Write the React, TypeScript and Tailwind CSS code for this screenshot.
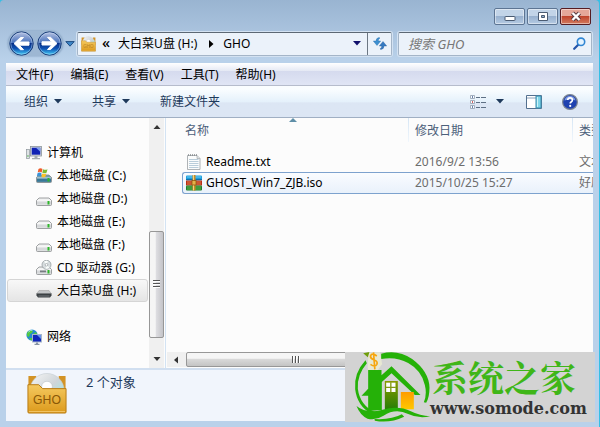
import type { ReactNode } from 'react'

type DriveKind = 'system' | 'disk' | 'cd' | 'usb'

const menus = ['文件(F)', '编辑(E)', '查看(V)', '工具(T)', '帮助(H)']

const drives: { name: string; kind: DriveKind; selected?: boolean }[] = [
  { name: '本地磁盘 (C:)', kind: 'system' },
  { name: '本地磁盘 (D:)', kind: 'disk' },
  { name: '本地磁盘 (E:)', kind: 'disk' },
  { name: '本地磁盘 (F:)', kind: 'disk' },
  { name: 'CD 驱动器 (G:)', kind: 'cd' },
  { name: '大白菜U盘 (H:)', kind: 'usb', selected: true },
]

const files = [
  { name: 'Readme.txt', date: '2016/9/2 13:56', type: '文本文档', archive: false },
  { name: 'GHOST_Win7_ZJB.iso', date: '2015/10/25 15:27', type: '好压 ISO', archive: true },
]

const Triangle = ({ className = 'text-[#1e395b]' }: { className?: string }) => (
  <svg viewBox="0 0 8 5" className={`h-[5px] w-2 shrink-0 ${className}`}>
    <path d="M0 0h8L4 4.5z" fill="currentColor" />
  </svg>
)

const NavButtons = () => (
  <div className="relative flex shrink-0 items-center gap-[3px] rounded-full bg-[#9db7d3] px-px shadow-[0_0_2px_#6f8cae]">
    {[false, true].map((forward) => (
      <button key={String(forward)} aria-label={forward ? '前进' : '后退'}>
        <svg viewBox="0 0 25 25" className="size-[25px]">
          <defs>
            <linearGradient id="navBall" x1="0" y1="0" x2="0" y2="1">
              <stop offset="0" stopColor="#b9c3e2" />
              <stop offset=".46" stopColor="#4a74bd" />
              <stop offset=".5" stopColor="#083088" />
              <stop offset=".72" stopColor="#1054b4" />
              <stop offset="1" stopColor="#46d4fb" />
            </linearGradient>
          </defs>
          <circle cx="12.500" cy="12.500" r="11.700" fill="url(#navBall)" stroke="#183c78" />
          <circle cx="12.500" cy="12.500" r="10.700" fill="none" stroke="#cfe4fa" strokeOpacity=".55" strokeWidth=".8" />
          <path
            d="M5 12.500 11.500 6.500h3l-4.200 4.500H20v3.200h-9.700l4.200 4.500h-3z"
            fill="#fff"
            stroke="#fff"
            strokeLinejoin="round"
            transform={forward ? 'rotate(180 12.500 12.500)' : undefined}
          />
        </svg>
      </button>
    ))}
  </div>
)

const FolderIcon = ({ className, label }: { className: string; label?: boolean }) => (
  <svg viewBox="0 0 40 44" className={className}>
    <defs>
      <linearGradient id="folder" x1="0" y1="0" x2="0" y2="1">
        <stop offset="0" stopColor="#f5c95f" />
        <stop offset="1" stopColor="#dc9a1c" />
      </linearGradient>
      <linearGradient id="disc" x1="0" y1="0" x2="1" y2="1">
        <stop offset="0" stopColor="#f7f7f7" />
        <stop offset=".5" stopColor="#cfd5d9" />
        <stop offset=".75" stopColor="#aee4e0" />
        <stop offset="1" stopColor="#ededf5" />
      </linearGradient>
    </defs>
    <path d="M1 4h8v20H1zM32 4h7v20h-7z" fill="#d39325" />
    <circle cx="20" cy="19" r="17.500" fill="url(#disc)" stroke="#c3cbd0" strokeWidth=".6" />
    <circle cx="20" cy="15" r="5.500" fill="#fff" stroke="#b8bfc4" strokeWidth=".6" />
    <path d="M.500 13h11l4 4h24v24q0 1-1 1h-37q-1 0-1-1z" fill="url(#folder)" stroke="#b87b12" />
    <path d="M1.500 40.500h37" stroke="#f8d27e" strokeWidth=".8" />
    <text
      x="20"
      y="33"
      textAnchor="middle"
      fontSize="12.500"
      fill={label ? '#8a5806' : '#b98022'}
      className="font-['Liberation_Sans',sans-serif]"
    >
      GHO
    </text>
  </svg>
)

const ComputerIcon = () => (
  <svg viewBox="0 0 16 16" className="size-4 shrink-0">
    <rect x=".5" y="4.500" width="3" height="9" fill="#dfe3e6" stroke="#8c949b" strokeWidth=".7" />
    <path d="M1.200 11h1.500" stroke="#3daa35" />
    <rect x="4.500" y="1.500" width="11" height="9.500" fill="#d9dde0" stroke="#8c949b" strokeWidth=".8" />
    <path d="M5.700 2.700h8.600v7H5.700z" fill="#1022b4" />
    <path d="M10 2.700h4.300v4z" fill="#7fa1ee" />
    <path d="M8.500 11h3v2h2.500v1.300H6V13h2.500z" fill="#a5acb1" />
  </svg>
)

const NetworkIcon = () => (
  <svg viewBox="0 0 16 16" className="size-4 shrink-0">
    <circle cx="6" cy="6" r="5.600" fill="#258ad4" />
    <path d="M2 2.500 5 1l2 1-1 2-2 1-1 3-2-1q-.6-3 1-4.500M7 5l3-2 1 2-2 3-2-.500zM3 9l3 0 0 2.500q-2 0-3-2.500" fill="#52c943" />
    <path d="M2.500 3q2-2.500 4-2" stroke="#c5eefa" fill="none" />
    <rect x="6.500" y="5.500" width="9" height="7.500" fill="#1128ba" stroke="#a7b6c8" />
    <path d="M11 6h4v4z" fill="#6694ee" />
    <path d="M10 13.500h2v1.200h1.500V16h-5v-1.300H10z" fill="#8694a4" />
  </svg>
)

const DriveIcon = ({ kind }: { kind: DriveKind }) => (
  <svg viewBox="0 0 16 16" className="size-4 shrink-0">
    {kind === 'usb' ? (
      <>
        <path d="M3 7.500h10l2.500 3.500h-15z" fill="#c3c5c7" stroke="#999" strokeWidth=".5" />
        <path d="M.500 10.500h15v2l-1.500 2H2l-1.500-2z" fill="#3c4144" />
        <path d="M2.500 13h11" stroke="#73797c" />
      </>
    ) : (
      <>
        <path
          d="M3 7h10l2.500 2.500v4q0 1-1 1h-13q-1 0-1-1v-4z"
          fill={kind === 'system' ? '#719eb0' : '#f1f2f2'}
          stroke="#85898c"
          strokeWidth=".8"
        />
        <path d="M1 10h14v3.700H1z" fill={kind === 'system' ? '#397897' : '#d6d8da'} />
        <path d="M1 10h14" stroke="#fff" strokeWidth=".7" />
        <rect x="11.500" y="10" width="2" height="3.500" fill="#2eb82a" />
      </>
    )}
    {kind === 'system' && (
      <>
        <path d="M2.500 1q2-1.500 4 0L5.700 4.500q-2-1.300-4 0z" fill="#ef5a28" />
        <path d="M7.200 1.200q2 1.300 4.300 0l-1 3.500q-2 1.300-4.200 0z" fill="#7cba32" />
        <path d="M1.500 5.200q2-1.200 4 0L4.800 8.500q-2-1.300-4 0z" fill="#3993d8" />
        <path d="M6.200 5.500q2 1.200 4.200 0l-1 3.300q-2 1.200-4 0z" fill="#fbc22c" />
      </>
    )}
    {kind === 'cd' && (
      <>
        <circle cx="10.500" cy="4.800" r="4.500" fill="#d7dddf" stroke="#8b9397" strokeWidth=".7" />
        <path d="M10.500 4.800 8 1.500q2-1.200 4-.5zM10.500 4.800l3 3q-2 1.500-4 .800z" fill="#f9fdfb" />
        <circle cx="10.500" cy="4.800" r="1.300" fill="#fff" stroke="#8b9397" strokeWidth=".6" />
        <path d="M4 10.500h6v1.800H4z" fill="#777d81" />
      </>
    )}
  </svg>
)

const TextFileIcon = () => (
  <svg viewBox="0 0 16 16" className="size-4">
    <path d="M1.500 1.500h9.500l3 3v11H1.500z" fill="#fbfcfc" stroke="#9ba0a3" strokeWidth=".8" />
    <path d="M2.500 0v2M4.500 0v2M6.500 0v2M8.500 0v2M10.500 0v2" stroke="#7d8285" strokeWidth=".7" />
    <path d="M3 5.500h9.500M3 7.500h9.500M3 9.500h9.500M3 11.500h9.500M3 13.500h9.500" stroke="#a9c0d1" strokeWidth=".8" />
    <path d="M11 1.500v3h3" fill="#dde1e3" stroke="#9ba0a3" strokeWidth=".6" />
  </svg>
)

const ArchiveIcon = () => (
  <svg viewBox="0 0 16 16" className="size-4">
    <rect y=".5" width="16" height="5" rx="1" fill="#1c9edc" />
    <path d="M1 2h14" stroke="#70d0f5" />
    <path d="M0 4.500h16" stroke="#1370a8" />
    <rect y="5.500" width="16" height="5" fill="#b82d16" />
    <path d="M1 7h14M1 9h14" stroke="#f1a467" strokeWidth=".7" />
    <rect y="10.500" width="16" height="5" rx="1" fill="#1d7e2d" />
    <path d="M1 12h14M1 14h14" stroke="#7cc654" strokeWidth=".8" />
    <path d="M6.500 0h3v15.500h-3z" fill="#c98a22" />
    <path d="M7.500 0v15.500" stroke="#f4d283" />
    <rect x="6" y="5.500" width="4" height="4.500" fill="#e5b149" stroke="#85510b" strokeWidth=".7" />
  </svg>
)

const WindowButton = ({ label, close, children }: { label: string; close?: boolean; children: ReactNode }) => (
  <button
    aria-label={label}
    className={`flex h-[17px] w-[31px] items-center justify-center rounded-[2px] border shadow-[inset_0_0_0_1px_rgba(255,255,255,0.45)] ${
      close
        ? 'border-[#561c22] bg-linear-to-b from-[#e5a799] from-45% via-[#c0442c] via-50% to-[#d27b60]'
        : 'border-[#5d7593] bg-linear-to-b from-[#c2d4e8] from-45% via-[#98b1cf] via-50% to-[#b5cbe3]'
    }`}
  >
    <svg viewBox="0 0 12 11" className="h-[11px] w-3">
      {children}
    </svg>
  </button>
)

const TitleBar = () => (
  <div className="flex justify-end gap-[2px] pt-2 pr-[2px]">
    <WindowButton label="最小化">
      <rect x="1" y="5.500" width="10" height="4" rx=".5" fill="#fff" stroke="#4a5b72" />
    </WindowButton>
    <WindowButton label="最大化">
      <path d="M1.500 1.500h9v8h-9z" fill="#fff" stroke="#4a5b72" />
      <path d="M4.500 4.500h3v2h-3z" fill="#91adcc" stroke="#4a5b72" />
    </WindowButton>
    <WindowButton label="关闭" close>
      <path d="m2.500 2 7 7m0-7-7 7" stroke="#54393f" strokeWidth="4.200" />
      <path d="m2.500 2 7 7m0-7-7 7" stroke="#fff" strokeWidth="2.400" />
    </WindowButton>
  </div>
)

const AddressRow = () => (
  <div className="flex items-center pr-px pb-[7px] pt-[6px]">
    <div className="flex flex-none items-center gap-[2px] pl-[2px]">
      <NavButtons />
      <button aria-label="最近的页面">
        <svg viewBox="0 0 10 6" className="h-[6px] w-[10px]">
          <path d="M.800.600h8.400L5 5.200z" fill="#3d87c8" stroke="#17447b" strokeWidth=".9" />
        </svg>
      </button>
    </div>
    <div className="ml-[2px] flex h-6 min-w-0 flex-1 rounded-[2px] border border-[#a4b5c8] border-t-[#5c6874] bg-[#ebf2fa] shadow-[0_0_0_1px_#d3e2f2]">
      <FolderIcon className="ml-[3px] h-4 w-[15px] self-center" />
      <span className="ml-[6px] text-[15px] leading-[18px] font-medium">«</span>
      <span className="ml-[8px] leading-[22px] whitespace-nowrap">大白菜U盘 (H:)</span>
      <svg viewBox="0 0 5 8" className="ml-[12px] h-2 w-[5px] self-center">
        <path d="M0 0v8l4.500-4z" />
      </svg>
      <span className="ml-[9px] leading-[22px]">GHO</span>
      <button aria-label="以前的位置" className="mr-[6px] ml-auto">
        <Triangle className="text-[#10106c]" />
      </button>
      <button aria-label="刷新" className="flex w-6 items-center justify-center border-l border-[#6c7783]">
        <svg viewBox="0 0 14 13" className="h-[13px] w-[14px]">
          <path d="M6 .500Q3 1 3 4H.300L4 8.500 7.700 4H5.200q0-2 1.800-3z" fill="#3c8fd0" stroke="#2a6fae" strokeWidth=".4" />
          <path d="M8 12.500q3-.500 3-3.500h2.700L10 4.500 6.300 9h2.500q0 2-1.800 3z" fill="#3579c0" stroke="#2a5f9e" strokeWidth=".4" />
        </svg>
      </button>
    </div>
    <div className="ml-[6px] flex h-6 w-[194px] items-center rounded-[2px] border border-[#a4b5c8] border-t-[#5c6874] bg-[#ebf2fa] pr-[5px] pl-[9px] shadow-[0_0_0_1px_#d3e2f2]">
      <input
        aria-label="搜索 GHO"
        placeholder="搜索 GHO"
        className="min-w-0 flex-1 text-[13px] italic outline-none placeholder:text-[#777]"
      />
      <svg viewBox="0 0 13 13" className="size-[13px]" fill="none">
        <path d="m1.200 11.800 4-4" stroke="#2454a8" strokeWidth="2.200" strokeLinecap="round" />
        <circle cx="8" cy="4.800" r="3.700" fill="#e4f3ff" stroke="#3186d3" strokeWidth="1.600" />
      </svg>
    </div>
  </div>
)

const MenuBar = () => (
  <div className="flex h-[23px] gap-[17px] border-b border-[#b6bccc] bg-[linear-gradient(#fff,#e6eaf5_34%,#d5daee_36%,#e0e5f5)] pl-[10px] leading-[23px]">
    {menus.map((menu) => (
      <button key={menu} className="whitespace-nowrap">
        {menu}
      </button>
    ))}
  </div>
)

const Toolbar = () => (
  <div className="flex h-8 items-center border-b border-[#a0afc3] bg-linear-to-b from-[#fafdff] from-10% via-[#e5f1fb] via-50% to-[#dce6f4] to-55% pr-[15px] pl-[18px] text-[#1e395b]">
    <button className="mr-[30px] flex items-center gap-[6px]">
      组织
      <Triangle />
    </button>
    <button className="mr-[30px] flex items-center gap-[6px]">
      共享
      <Triangle />
    </button>
    <button>新建文件夹</button>
    <button aria-label="更改您的视图" className="mr-[22px] ml-auto flex items-center gap-[10px]">
      <svg viewBox="0 0 16 14" className="h-[14px] w-4" fill="none">
        <path d="M.500.500h4v3h-4zM.500 5.500h4v3h-4zM.500 10.500h4v3h-4z" fill="#fff" stroke="#8f9dad" strokeWidth=".8" />
        <path d="M2 2h1M2 12h1" stroke="#355a94" strokeWidth="1.500" />
        <path d="M2 7h1" stroke="#c22f2f" strokeWidth="1.500" />
        <path d="M6 2.500h4m1 0h5M6 7.500h4m1 0h5M6 12.500h4m1 0h5" stroke="#5e7085" />
      </svg>
      <Triangle />
    </button>
    <button aria-label="显示预览窗格" className="mr-5">
      <svg viewBox="0 0 16 14" className="h-[14px] w-4">
        <path d="M.500.500h15v13H.500z" fill="#fff" stroke="#53708f" />
        <path d="M1 3h9" stroke="#8aa0b8" />
        <path d="M10 1h5v12h-5z" fill="#7fd5e8" stroke="#3b8aac" />
        <path d="M11.500 2v10" stroke="#caf3f8" />
      </svg>
    </button>
    <button aria-label="获取帮助">
      <svg viewBox="0 0 16 16" className="size-4">
        <circle cx="8" cy="8" r="7.400" fill="#1f42b0" stroke="#7e8792" strokeWidth="1.200" />
        <path d="M2.500 6.500a5.600 5.600 0 0 1 11 0q-5-2-11 0" fill="#7f9be2" />
        <path d="M5.700 6q.2-2.200 2.400-2.200T10.400 6q0 1.100-1.300 2-.9.600-.9 1.600" fill="none" stroke="#fff" strokeWidth="1.700" />
        <circle cx="8.200" cy="11.900" r="1.100" fill="#fff" />
      </svg>
    </button>
  </div>
)

const Sidebar = () => (
  <div className="flex w-40 shrink-0 border-r border-[#d3e3f3]">
    <nav className="min-w-0 flex-1 px-px pt-[23px] leading-[21px]">
      <a href="#computer" className="flex h-[23px] items-center gap-[5px] pl-[19px]">
        <ComputerIcon />
        计算机
      </a>
      {drives.map((drive) => (
        <a
          key={drive.name}
          href="#drive"
          className={`flex h-[23px] items-center gap-[5px] rounded-[3px] border pl-[28px] whitespace-nowrap ${
            drive.selected
              ? 'border-[#d5d5d5] bg-linear-to-b from-[#f8f8f8] to-[#e5e5e5]'
              : 'border-transparent'
          }`}
        >
          <DriveIcon kind={drive.kind} />
          {drive.name}
        </a>
      ))}
      <a href="#network" className="mt-[23px] flex h-[23px] items-center gap-[5px] pl-[19px]">
        <NetworkIcon />
        网络
      </a>
    </nav>
    <div className="mr-px flex w-[15px] flex-col items-center bg-[#f0f0f0]">
      <svg viewBox="0 0 8 4" className="mt-[7px] h-1 w-2">
        <path d="M4 0l3.500 4h-7z" fill="#333" />
      </svg>
      <div className="flex-[103]" />
      <div className="flex w-full flex-[106] items-center justify-center rounded-[2px] border border-[#979797] bg-linear-to-r from-[#f5f5f5] from-40% via-[#dcdce0] via-50% to-[#c4c4c8]">
        <svg viewBox="0 0 7 9" className="h-[9px] w-[7px]">
          <path d="M0 .500h7M0 3.500h7M0 6.500h7" stroke="#555" />
          <path d="M0 1.500h7M0 4.500h7M0 7.500h7" stroke="#fff" />
        </svg>
      </div>
      <div className="flex-[19]" />
      <svg viewBox="0 0 8 4" className="mb-[7px] h-1 w-2">
        <path d="M.500 0h7L4 4z" fill="#333" />
      </svg>
    </div>
  </div>
)

const FileList = () => (
  <div className="flex min-w-0 flex-1 flex-col overflow-hidden pl-px">
    <svg viewBox="0 0 8 4" className="ml-[122px] h-1 w-2">
      <path d="M4 0l4 4H0z" fill="#5f8fa8" />
    </svg>
    <table className="-mt-1 ml-[15px] w-[calc(100%-15px)] table-fixed border-separate border-spacing-0 text-left">
      <colgroup>
        <col className="w-[226px]" />
        <col className="w-[164px]" />
        <col />
      </colgroup>
      <thead>
        <tr className="text-[#4c607a]">
          <th className="h-[33px] pb-[7px] pl-[3px] font-normal">名称</th>
          <th className="bg-linear-to-b from-[#d6e6f5] to-[#f0f6fc] bg-[length:1px_24px] bg-no-repeat pb-[7px] pl-[7px] font-normal">
            修改日期
          </th>
          <th className="overflow-hidden bg-linear-to-b from-[#d6e6f5] to-[#f0f6fc] bg-[length:1px_24px] bg-no-repeat pb-[7px] pl-[7px] font-normal whitespace-nowrap">
            类型
          </th>
        </tr>
      </thead>
      <tbody className="leading-[20px]">
        {files.map((file) => {
          const cell = file.archive
            ? 'border-y border-[#7da2ce] bg-linear-to-b from-[#fafcff] to-[#e9f1fb]'
            : 'border-y border-transparent border-b-0'
          return (
            <tr key={file.name}>
              <td className={`${cell} ${file.archive ? 'rounded-l-[3px] border-l' : 'border-l'}`}>
                <div className="flex items-center gap-1 pl-[3px]">
                  {file.archive ? <ArchiveIcon /> : <TextFileIcon />}
                  {file.name}
                </div>
              </td>
              <td className={`${cell} pl-[7px] text-[#6d6d6d]`}>{file.date}</td>
              <td className={`${cell} overflow-hidden pl-[7px] whitespace-nowrap text-[#6d6d6d]`}>{file.type}</td>
            </tr>
          )
        })}
      </tbody>
    </table>
    <div className="mt-auto mb-px flex h-[15px] items-center bg-[#f0f0f0]">
      <svg viewBox="0 0 4 8" className="mx-[7px] h-2 w-1">
        <path d="M4 .500v7L0 4z" fill="#333" />
      </svg>
      <div className="ml-px flex h-full flex-[220] items-center justify-center rounded-[2px] border border-[#979797] bg-linear-to-b from-[#f5f5f5] from-40% via-[#d8d8d8] via-50% to-[#c4c4c4]">
        <svg viewBox="0 0 9 7" className="h-[7px] w-[9px]">
          <path d="M.500 0v7M3.500 0v7M6.500 0v7" stroke="#555" />
          <path d="M1.500 0v7M4.500 0v7M7.500 0v7" stroke="#fff" />
        </svg>
      </div>
      <div className="flex-[187]" />
    </div>
  </div>
)

const Watermark = () => (
  <div className="absolute right-1 bottom-[5px] flex h-[70px] w-[250px] bg-[#d3d3d3]">
    <svg viewBox="15 66 260 210" className="h-[70px] w-[87px] shrink-0">
      <defs>
        <linearGradient id="door" x1="0" y1="0" x2="0" y2="1">
          <stop offset="0" stopColor="#8a9b00" />
          <stop offset="1" stopColor="#247d05" />
        </linearGradient>
        <linearGradient id="box" x1="0" y1="0" x2="0" y2="1">
          <stop offset="0" stopColor="#ff9c00" />
          <stop offset="1" stopColor="#ffc800" />
        </linearGradient>
      </defs>
      <path d="M76 91Q40 130 45 178q6 50 48 73l12-4q-46-22-52-71-3-41 27-76z" fill="#25b108" />
      <path d="M123 71q50-14 93 16 51 38 52 86 0 28-10 45l-7-1q10-24 3-52-10-44-50-66-36-20-81-12z" fill="#25b108" />
      <path d="M84 120h40v16l30-27 87 86h-17l-70-65-29 26v84l-41 3v-46H64l20-21z" fill="#25b108" />
      <path d="M134 153h39v87h-39z" fill="url(#door)" />
      <path d="M138 158h28v28h-28z" fill="#fff" />
      <path d="M152 157v30M137 172h30" stroke="#829711" strokeWidth="4" />
      <path d="M182 186h39v52h-39z" fill="url(#box)" />
      <path d="M49 228q30 24 78 11 48-13 85 5 28 14 58 15-35 8-66-7-38-18-74 5-23 15-48 9-22-10-33-38" fill="#25b108" />
      <path d="M104 272q44 9 88-12l-7-7q-31 17-82 14z" fill="#25b108" />
      <path d="M69 70l19-4-5 16z" fill="#6f9d0a" />
      <path d="M87 68l32-1 7 35-13 18H84q-4-16 3-52" fill="#e7e8d2" />
      <path d="M110 78q-15-11-19 0-1 7 10 11 13 5 9 14-5 10-19 0M100 67l4 51" fill="none" stroke="#f7a50c" strokeWidth="5" />
    </svg>
    <div className="flex flex-col whitespace-nowrap">
      <span className="mt-1 font-['Noto_Serif_CJK_SC','Noto_Sans_CJK_SC',serif] text-[36px] leading-[42px] font-bold text-[#3fb618]">
        系统之家
      </span>
      <span className="-ml-[2px] font-['DejaVu_Serif',serif] text-[16px] leading-[22px] font-bold text-[#333]">
        www.somode.com
      </span>
    </div>
  </div>
)

export default function App() {
  return (
    <div className="min-h-screen bg-[#35bfe5] pr-px">
      <div className="relative flex min-h-screen flex-col rounded-t-[4px] bg-[#b9d1ea] bg-linear-to-b from-[#99b4d1] to-[#b9d1ea] to-[60px] pr-[6px] pb-[6px] pl-[6px] font-['Noto_Sans','Noto_Sans_CJK_SC',sans-serif] text-[12px] leading-[18px] text-black">
        <TitleBar />
        <AddressRow />
        <MenuBar />
        <Toolbar />
        <main className="flex flex-1 bg-[#fcfcfc]">
          <Sidebar />
          <FileList />
        </main>
        <footer className="flex h-[53px] items-start gap-[19px] border-t-2 border-[#d1dff0] bg-[#f1f5fc] pt-[2px] pl-[21px] text-[#1e395b]">
          <FolderIcon className="h-[43px] w-[40px]" label />
          <span className="pt-px text-[13px]">2 个对象</span>
        </footer>
        <Watermark />
      </div>
    </div>
  )
}
